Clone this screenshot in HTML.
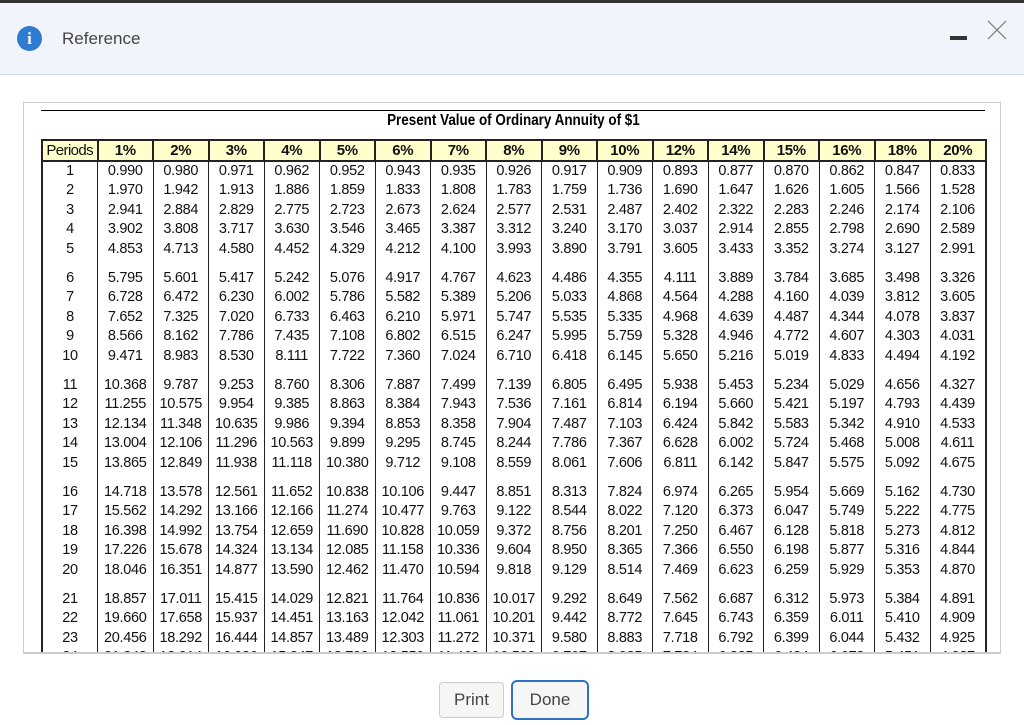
<!DOCTYPE html>
<html><head><meta charset="utf-8"><style>
*{margin:0;padding:0;box-sizing:border-box}
body{width:1024px;height:725px;overflow:hidden;background:#fff;font-family:"Liberation Sans",Arial,sans-serif;position:relative}
.top{position:absolute;left:0;top:0;width:1024px;height:3px;background:#333}
.hdr{position:absolute;left:0;top:3px;width:1024px;height:72px;background:#f1f4fb;border-bottom:1px solid #cfe0f0}
.ic{position:absolute;left:17px;top:23px;width:25px;height:25px;border-radius:50%;background:#2f7bd0;color:#fff;font:bold 17px/25px "Liberation Serif",serif;text-align:center}
.ttl{position:absolute;left:62px;top:26px;font-size:17px;color:#444}
.min{position:absolute;left:950px;top:33px;width:17px;height:4px;background:#333}
.frame{position:absolute;left:23px;top:102px;width:978px;height:552px;border:1px solid #ccc;border-bottom:2px solid #ccc;overflow:hidden;background:#fff}
.line{position:absolute;left:17px;top:7px;width:944px;height:1px;background:#000}
.tt{position:absolute;left:0;width:978px;top:9px;text-align:center;font-weight:bold;font-size:16px;color:#000}
.tt span{display:inline-block;transform:scaleX(0.84)}
table{position:absolute;left:17px;top:36px;border-collapse:collapse;table-layout:fixed;width:944px;font-size:14.5px;color:#111;letter-spacing:-0.3px}
td,th{width:55.5px;text-align:center;border-left:1px solid #222;border-right:1px solid #222;padding:0;white-space:nowrap}
th{background:#ffffcc;height:21px;border:2px solid #222;font-weight:bold;font-size:15px}
th.p{font-weight:normal;letter-spacing:-0.6px}
td{height:19.4px;line-height:19.4px}
tr.g td{height:29.4px;vertical-align:bottom;line-height:19.4px}
table{border:2px solid #222}
.btn{position:absolute;font-size:17px;color:#444;text-align:center;background:#f6f6f6}
</style></head><body>
<div class="top"></div>
<div class="hdr"><div class="ic">i</div><div class="ttl">Reference</div><div class="min"></div>
<svg style="position:absolute;left:987px;top:17px" width="20" height="20"><path d="M1 1L19 19M19 1L1 19" stroke="#777" stroke-width="1.2"/></svg></div>
<div class="frame"><div class="line"></div><div class="tt"><span>Present Value of Ordinary Annuity of $1</span></div>
<table>
<tr><th class="p">Periods</th><th>1%</th><th>2%</th><th>3%</th><th>4%</th><th>5%</th><th>6%</th><th>7%</th><th>8%</th><th>9%</th><th>10%</th><th>12%</th><th>14%</th><th>15%</th><th>16%</th><th>18%</th><th>20%</th></tr>
<tr><td>1</td><td>0.990</td><td>0.980</td><td>0.971</td><td>0.962</td><td>0.952</td><td>0.943</td><td>0.935</td><td>0.926</td><td>0.917</td><td>0.909</td><td>0.893</td><td>0.877</td><td>0.870</td><td>0.862</td><td>0.847</td><td>0.833</td></tr>
<tr><td>2</td><td>1.970</td><td>1.942</td><td>1.913</td><td>1.886</td><td>1.859</td><td>1.833</td><td>1.808</td><td>1.783</td><td>1.759</td><td>1.736</td><td>1.690</td><td>1.647</td><td>1.626</td><td>1.605</td><td>1.566</td><td>1.528</td></tr>
<tr><td>3</td><td>2.941</td><td>2.884</td><td>2.829</td><td>2.775</td><td>2.723</td><td>2.673</td><td>2.624</td><td>2.577</td><td>2.531</td><td>2.487</td><td>2.402</td><td>2.322</td><td>2.283</td><td>2.246</td><td>2.174</td><td>2.106</td></tr>
<tr><td>4</td><td>3.902</td><td>3.808</td><td>3.717</td><td>3.630</td><td>3.546</td><td>3.465</td><td>3.387</td><td>3.312</td><td>3.240</td><td>3.170</td><td>3.037</td><td>2.914</td><td>2.855</td><td>2.798</td><td>2.690</td><td>2.589</td></tr>
<tr><td>5</td><td>4.853</td><td>4.713</td><td>4.580</td><td>4.452</td><td>4.329</td><td>4.212</td><td>4.100</td><td>3.993</td><td>3.890</td><td>3.791</td><td>3.605</td><td>3.433</td><td>3.352</td><td>3.274</td><td>3.127</td><td>2.991</td></tr>
<tr class="g"><td>6</td><td>5.795</td><td>5.601</td><td>5.417</td><td>5.242</td><td>5.076</td><td>4.917</td><td>4.767</td><td>4.623</td><td>4.486</td><td>4.355</td><td>4.111</td><td>3.889</td><td>3.784</td><td>3.685</td><td>3.498</td><td>3.326</td></tr>
<tr><td>7</td><td>6.728</td><td>6.472</td><td>6.230</td><td>6.002</td><td>5.786</td><td>5.582</td><td>5.389</td><td>5.206</td><td>5.033</td><td>4.868</td><td>4.564</td><td>4.288</td><td>4.160</td><td>4.039</td><td>3.812</td><td>3.605</td></tr>
<tr><td>8</td><td>7.652</td><td>7.325</td><td>7.020</td><td>6.733</td><td>6.463</td><td>6.210</td><td>5.971</td><td>5.747</td><td>5.535</td><td>5.335</td><td>4.968</td><td>4.639</td><td>4.487</td><td>4.344</td><td>4.078</td><td>3.837</td></tr>
<tr><td>9</td><td>8.566</td><td>8.162</td><td>7.786</td><td>7.435</td><td>7.108</td><td>6.802</td><td>6.515</td><td>6.247</td><td>5.995</td><td>5.759</td><td>5.328</td><td>4.946</td><td>4.772</td><td>4.607</td><td>4.303</td><td>4.031</td></tr>
<tr><td>10</td><td>9.471</td><td>8.983</td><td>8.530</td><td>8.111</td><td>7.722</td><td>7.360</td><td>7.024</td><td>6.710</td><td>6.418</td><td>6.145</td><td>5.650</td><td>5.216</td><td>5.019</td><td>4.833</td><td>4.494</td><td>4.192</td></tr>
<tr class="g"><td>11</td><td>10.368</td><td>9.787</td><td>9.253</td><td>8.760</td><td>8.306</td><td>7.887</td><td>7.499</td><td>7.139</td><td>6.805</td><td>6.495</td><td>5.938</td><td>5.453</td><td>5.234</td><td>5.029</td><td>4.656</td><td>4.327</td></tr>
<tr><td>12</td><td>11.255</td><td>10.575</td><td>9.954</td><td>9.385</td><td>8.863</td><td>8.384</td><td>7.943</td><td>7.536</td><td>7.161</td><td>6.814</td><td>6.194</td><td>5.660</td><td>5.421</td><td>5.197</td><td>4.793</td><td>4.439</td></tr>
<tr><td>13</td><td>12.134</td><td>11.348</td><td>10.635</td><td>9.986</td><td>9.394</td><td>8.853</td><td>8.358</td><td>7.904</td><td>7.487</td><td>7.103</td><td>6.424</td><td>5.842</td><td>5.583</td><td>5.342</td><td>4.910</td><td>4.533</td></tr>
<tr><td>14</td><td>13.004</td><td>12.106</td><td>11.296</td><td>10.563</td><td>9.899</td><td>9.295</td><td>8.745</td><td>8.244</td><td>7.786</td><td>7.367</td><td>6.628</td><td>6.002</td><td>5.724</td><td>5.468</td><td>5.008</td><td>4.611</td></tr>
<tr><td>15</td><td>13.865</td><td>12.849</td><td>11.938</td><td>11.118</td><td>10.380</td><td>9.712</td><td>9.108</td><td>8.559</td><td>8.061</td><td>7.606</td><td>6.811</td><td>6.142</td><td>5.847</td><td>5.575</td><td>5.092</td><td>4.675</td></tr>
<tr class="g"><td>16</td><td>14.718</td><td>13.578</td><td>12.561</td><td>11.652</td><td>10.838</td><td>10.106</td><td>9.447</td><td>8.851</td><td>8.313</td><td>7.824</td><td>6.974</td><td>6.265</td><td>5.954</td><td>5.669</td><td>5.162</td><td>4.730</td></tr>
<tr><td>17</td><td>15.562</td><td>14.292</td><td>13.166</td><td>12.166</td><td>11.274</td><td>10.477</td><td>9.763</td><td>9.122</td><td>8.544</td><td>8.022</td><td>7.120</td><td>6.373</td><td>6.047</td><td>5.749</td><td>5.222</td><td>4.775</td></tr>
<tr><td>18</td><td>16.398</td><td>14.992</td><td>13.754</td><td>12.659</td><td>11.690</td><td>10.828</td><td>10.059</td><td>9.372</td><td>8.756</td><td>8.201</td><td>7.250</td><td>6.467</td><td>6.128</td><td>5.818</td><td>5.273</td><td>4.812</td></tr>
<tr><td>19</td><td>17.226</td><td>15.678</td><td>14.324</td><td>13.134</td><td>12.085</td><td>11.158</td><td>10.336</td><td>9.604</td><td>8.950</td><td>8.365</td><td>7.366</td><td>6.550</td><td>6.198</td><td>5.877</td><td>5.316</td><td>4.844</td></tr>
<tr><td>20</td><td>18.046</td><td>16.351</td><td>14.877</td><td>13.590</td><td>12.462</td><td>11.470</td><td>10.594</td><td>9.818</td><td>9.129</td><td>8.514</td><td>7.469</td><td>6.623</td><td>6.259</td><td>5.929</td><td>5.353</td><td>4.870</td></tr>
<tr class="g"><td>21</td><td>18.857</td><td>17.011</td><td>15.415</td><td>14.029</td><td>12.821</td><td>11.764</td><td>10.836</td><td>10.017</td><td>9.292</td><td>8.649</td><td>7.562</td><td>6.687</td><td>6.312</td><td>5.973</td><td>5.384</td><td>4.891</td></tr>
<tr><td>22</td><td>19.660</td><td>17.658</td><td>15.937</td><td>14.451</td><td>13.163</td><td>12.042</td><td>11.061</td><td>10.201</td><td>9.442</td><td>8.772</td><td>7.645</td><td>6.743</td><td>6.359</td><td>6.011</td><td>5.410</td><td>4.909</td></tr>
<tr><td>23</td><td>20.456</td><td>18.292</td><td>16.444</td><td>14.857</td><td>13.489</td><td>12.303</td><td>11.272</td><td>10.371</td><td>9.580</td><td>8.883</td><td>7.718</td><td>6.792</td><td>6.399</td><td>6.044</td><td>5.432</td><td>4.925</td></tr>
<tr><td>24</td><td>21.243</td><td>18.914</td><td>16.936</td><td>15.247</td><td>13.799</td><td>12.550</td><td>11.469</td><td>10.529</td><td>9.707</td><td>8.985</td><td>7.784</td><td>6.835</td><td>6.434</td><td>6.073</td><td>5.451</td><td>4.937</td></tr>
</table></div>
<div class="btn" style="left:439px;top:682px;width:65px;height:36px;border:1px solid #ccc;border-radius:4px;line-height:34px">Print</div>
<div class="btn" style="left:511px;top:680px;width:78px;height:40px;border:2px solid #2f72c4;border-radius:6px;line-height:36px">Done</div>
</body></html>
